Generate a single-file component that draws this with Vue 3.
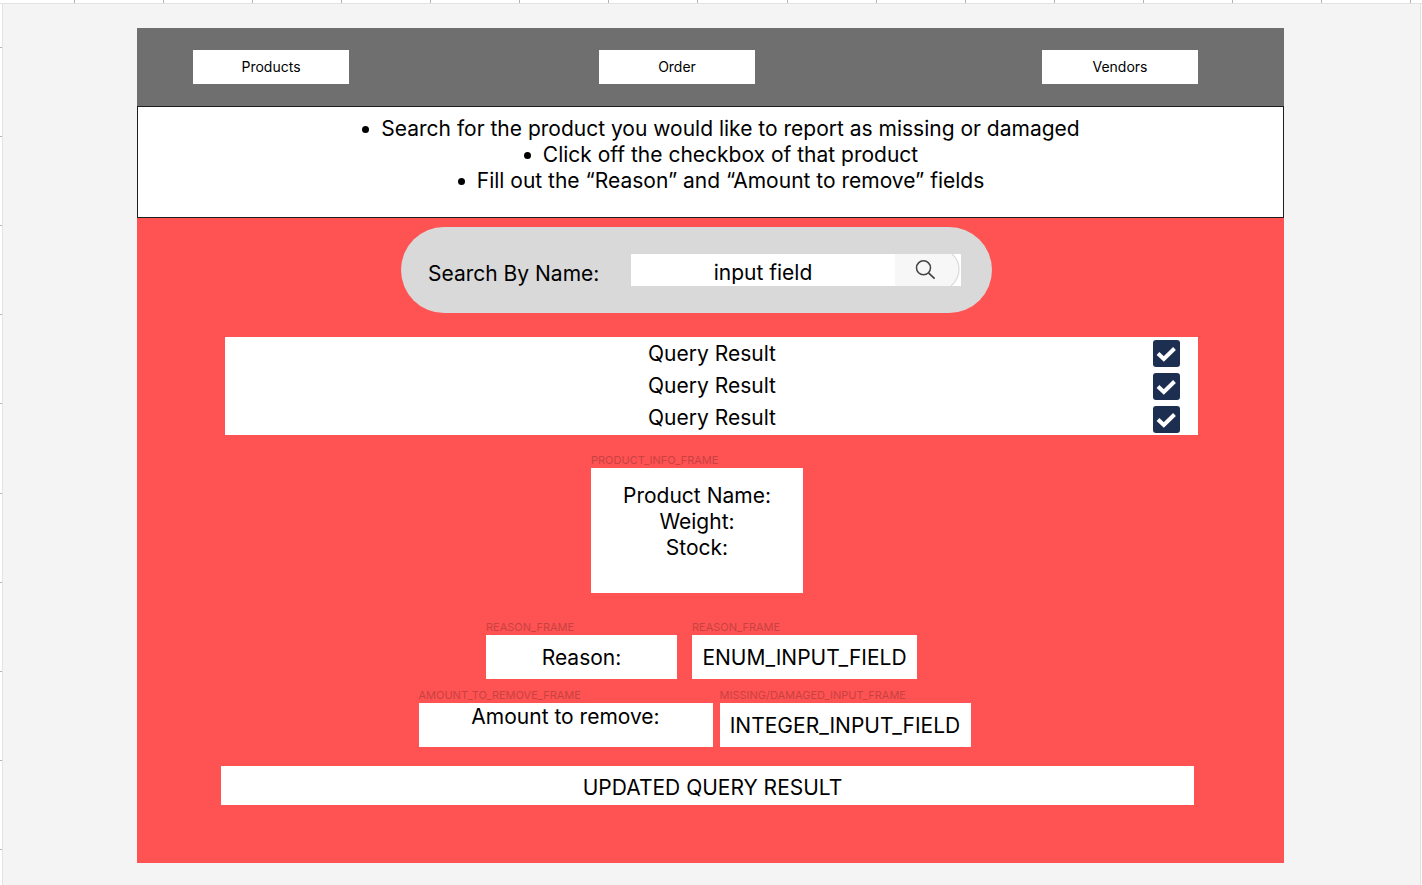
<script setup>
import { ref } from 'vue'

const navItems = ['Products', 'Order', 'Vendors']
const instructions = [
  'Search for the product you would like to report as missing or damaged',
  'Click off the checkbox of that product',
  'Fill out the “Reason” and “Amount to remove” fields',
]
const results = ref([
  { id: 'result-1', name: 'Query Result', checked: true },
  { id: 'result-2', name: 'Query Result', checked: true },
  { id: 'result-3', name: 'Query Result', checked: true },
])
const searchTerm = ref('input field')
const reason = ref('ENUM_INPUT_FIELD')
const amount = ref('INTEGER_INPUT_FIELD')
</script>

<template>
  <div class="page">
    <div class="ruler-top"><i v-for="n in 16" :key="n"></i></div>
    <div class="workspace">
      <div class="ruler-left"><i v-for="n in 10" :key="n"></i></div>
      <main class="board">
        <nav class="nav">
          <button v-for="item in navItems" :key="item" type="button">{{ item }}</button>
        </nav>

        <ul class="instructions">
          <li v-for="line in instructions" :key="line">{{ line }}</li>
        </ul>

        <section class="content">
          <form class="search" @submit.prevent>
            <label for="search">Search By Name:</label>
            <div class="search-box">
              <input id="search" v-model="searchTerm" type="text" />
              <button type="submit" aria-label="Search">
                <svg viewBox="0 0 66 32" width="66" height="32" fill="none">
                  <path d="M0 0H57Q64 6 64 15.500Q64 25 56 32H0Z" fill="#f7f7f7" />
                  <path d="M57 0Q64 6 64 15.500Q64 25 56 32" stroke="#dcdcdc" stroke-width="1.300" />
                  <circle cx="28.500" cy="13.800" r="7" stroke="#444" stroke-width="1.500" />
                  <path d="M33.500 18.800L39.600 24.700" stroke="#444" stroke-width="1.700" />
                </svg>
              </button>
            </div>
          </form>

          <div class="results">
            <div class="names">
              <label v-for="r in results" :key="r.id" :for="r.id">{{ r.name }}</label>
            </div>
            <div class="checks">
              <span v-for="r in results" :key="r.id" class="check">
                <input :id="r.id" v-model="r.checked" type="checkbox" />
                <svg v-if="r.checked" viewBox="0 0 27 27" width="27" height="27" fill="none">
                  <path d="M5 13.500L10.800 19L21.500 8.500" stroke="#fff" stroke-width="4" />
                </svg>
              </span>
            </div>
          </div>

          <div class="frame product">
            <h2>PRODUCT_INFO_FRAME</h2>
            <div class="panel">
              <p>Product Name:</p>
              <p>Weight:</p>
              <p>Stock:</p>
            </div>
          </div>

          <div class="row reason-row">
            <div class="frame reason">
              <h2>REASON_FRAME</h2>
              <label class="panel" for="reason">Reason:</label>
            </div>
            <div class="frame reason-input">
              <h2>REASON_FRAME</h2>
              <input id="reason" v-model="reason" class="panel" type="text" />
            </div>
          </div>

          <div class="row amount-row">
            <div class="frame amount">
              <h2>AMOUNT_TO_REMOVE_FRAME</h2>
              <label class="panel" for="amount">Amount to remove:</label>
            </div>
            <div class="frame amount-input">
              <h2>MISSING/DAMAGED_INPUT_FRAME</h2>
              <input id="amount" v-model="amount" class="panel" type="text" />
            </div>
          </div>

          <output class="updated">UPDATED QUERY RESULT</output>
        </section>
      </main>
      <div class="side-edge"></div>
    </div>
  </div>
</template>

<style>
body {
  margin: 0;
}
</style>

<style scoped>
* {
  box-sizing: border-box;
}
.page {
  display: flex;
  flex-direction: column;
  min-height: 100vh;
  background: #f4f4f4;
  color: #000;
  font-family: Inter, "Liberation Sans", sans-serif;
  font-size: 21px;
  line-height: 26px;
}
button,
input {
  margin: 0;
  padding: 0;
  border: 0;
  border-radius: 0;
  color: inherit;
  font: inherit;
  text-align: center;
}
.ruler-top {
  display: flex;
  justify-content: space-between;
  height: 4px;
  padding: 0 11px 0 74px;
  border-bottom: 1px solid #e3e3e3;
  background: #fff;
}
.ruler-top i {
  width: 1px;
  background: #b3b3b3;
}
.workspace {
  display: flex;
  flex: 1;
}
.ruler-left {
  display: flex;
  flex-direction: column;
  justify-content: space-between;
  width: 3px;
  padding: 43px 0 35px;
  border-right: 1px solid #e3e3e3;
  background: #fff;
}
.ruler-left i {
  height: 1px;
  background: #b3b3b3;
}
.side-edge {
  width: 2px;
  border-left: 1px solid #e3e3e3;
  background: #fff;
}
.board {
  flex: 1;
  align-self: flex-start;
  margin: 24px 136px 22px 134px;
  background: #ff5353;
}
.nav {
  display: flex;
  align-items: center;
  height: 78px;
  padding: 0 86px 0 56px;
  background: #6f6f6f;
}
.nav button {
  width: 156px;
  height: 34px;
  background: #fff;
  font-size: 14px;
}
.nav button:nth-child(2) {
  margin-left: 250px;
}
.nav button:last-child {
  margin-left: auto;
}
.instructions {
  display: flex;
  flex-direction: column;
  align-items: center;
  margin: 0;
  padding: 9px 0 23px 21px;
  border: 1px solid #1e1e1e;
  background: #fff;
  list-style: none;
}
.instructions li {
  display: flex;
  align-items: center;
}
.instructions li::before {
  content: "";
  width: 7px;
  height: 7px;
  margin-right: 12px;
  border-radius: 50%;
  background: #000;
}
.content {
  display: flex;
  flex-direction: column;
  align-items: center;
  padding: 9px 0 58px;
}
.search {
  display: flex;
  align-items: center;
  justify-content: space-between;
  width: 591px;
  height: 86px;
  margin-right: 28px;
  padding: 0 31px 0 27px;
  border-radius: 43px;
  background: #d9d9d9;
}
.search label {
  padding-top: 8px;
}
.search-box {
  display: flex;
  width: 330px;
  height: 32px;
  background: #fff;
}
.search-box input {
  flex: 1;
  min-width: 0;
  padding-top: 6px;
  background: #fff;
}
.search-box button {
  background: #fff;
}
svg {
  display: block;
}
.results {
  display: flex;
  align-self: stretch;
  margin: 24px 86px 0 88px;
  background: #fff;
}
.names {
  display: flex;
  flex: 1;
  flex-direction: column;
  align-items: center;
  padding: 1px 0 0 46px;
}
.names label {
  line-height: 32px;
}
.checks {
  display: flex;
  flex-direction: column;
  gap: 6px;
  padding: 3px 18px 2px 0;
}
.check {
  display: grid;
}
.check > * {
  grid-area: 1 / 1;
}
.check input {
  width: 27px;
  height: 27px;
  appearance: none;
  border-radius: 3px;
  background: #1d2f50;
}
.check svg {
  pointer-events: none;
}
.frame h2 {
  margin: 0;
  color: #c94242;
  font-size: 11px;
  font-weight: 400;
  line-height: 15px;
}
.panel {
  display: block;
  width: 100%;
  height: 44px;
  background: #fff;
  text-align: center;
}
.product {
  width: 212px;
  margin: 18px 27px 0 0;
}
.product .panel {
  height: 125px;
  padding-top: 15px;
}
.panel p {
  margin: 0;
}
.row {
  display: flex;
}
.reason-row {
  gap: 15px;
  margin: 27px 18px 0 0;
}
.reason {
  width: 191px;
}
.reason .panel {
  padding-top: 10px;
}
.reason-input {
  width: 225px;
}
.amount-row {
  gap: 7px;
  margin: 9px 32px 0 0;
}
.amount {
  width: 294px;
}
.amount .panel {
  padding-top: 1px;
}
.amount-input {
  width: 251px;
}
.updated {
  align-self: stretch;
  margin: 19px 90px 0 84px;
  padding: 9px 0 4px 10px;
  background: #fff;
  text-align: center;
}
</style>
